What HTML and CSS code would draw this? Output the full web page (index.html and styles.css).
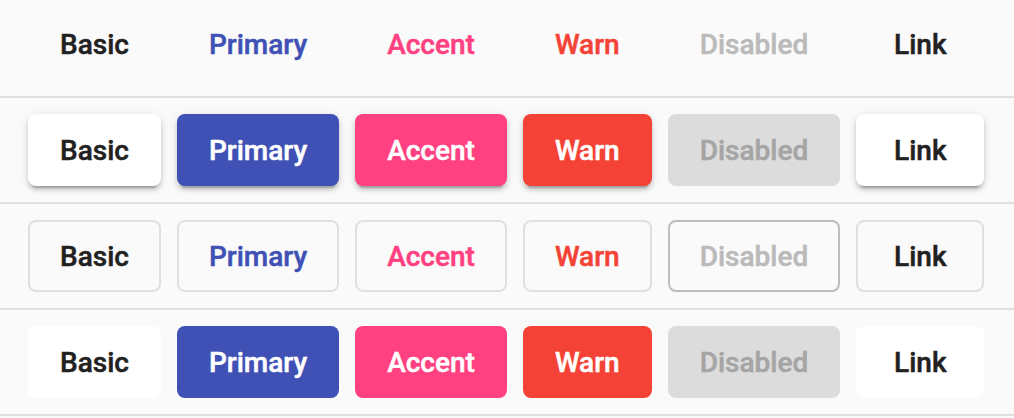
FILE: index.html
```html
<!DOCTYPE html>
<html>
<head>
<meta charset="utf-8">
<link rel="stylesheet" href="styles.css">
</head>
<body>
<section class="row row-first">
  <button class="btn">Basic</button>
  <button class="btn c-primary">Primary</button>
  <button class="btn c-accent">Accent</button>
  <button class="btn c-warn">Warn</button>
  <button class="btn c-disabled">Disabled</button>
  <button class="btn">Link</button>
</section>
<section class="row raised">
  <button class="btn">Basic</button>
  <button class="btn f-primary">Primary</button>
  <button class="btn f-accent">Accent</button>
  <button class="btn f-warn">Warn</button>
  <button class="btn f-disabled">Disabled</button>
  <button class="btn">Link</button>
</section>
<section class="row stroked">
  <button class="btn">Basic</button>
  <button class="btn c-primary">Primary</button>
  <button class="btn c-accent">Accent</button>
  <button class="btn c-warn">Warn</button>
  <button class="btn c-disabled s-disabled">Disabled</button>
  <button class="btn">Link</button>
</section>
<section class="row flat">
  <button class="btn">Basic</button>
  <button class="btn f-primary">Primary</button>
  <button class="btn f-accent">Accent</button>
  <button class="btn f-warn">Warn</button>
  <button class="btn f-disabled">Disabled</button>
  <button class="btn">Link</button>
</section>
</body>
</html>
```

FILE: styles.css
```css
html, body {
  background: #fafafa;
}
body {
  margin: 0;
  padding-top: 8px;
  font-family: Roboto, "Liberation Sans", sans-serif;
}
.row {
  display: flex;
  gap: 16px;
  padding: 16px 0 16px 28px;
  border-bottom: 2px solid #e0e0e0;
}
.row-first {
  padding-top: 0;
}
.btn {
  box-sizing: border-box;
  height: 72px;
  min-width: 128px;
  padding: 0 32px;
  border: none;
  border-radius: 8px;
  background: transparent;
  color: #212121;
  font-family: Roboto, "Liberation Sans", sans-serif;
  font-size: 28px;
  font-weight: 500;
  -webkit-text-stroke: 0.5px currentColor;
  line-height: 74px;
  white-space: nowrap;
}
.c-primary { color: #3f51b5; }
.c-accent { color: #ff4081; }
.c-warn { color: #f44336; }
.c-disabled { color: #bababa; }

.raised .btn, .flat .btn {
  background: #fff;
}
.raised .btn {
  box-shadow: 0 6px 2px -4px rgba(0, 0, 0, 0.2), 0 4px 4px 0 rgba(0, 0, 0, 0.14), 0 2px 10px 0 rgba(0, 0, 0, 0.12);
}
.raised .btn.f-disabled {
  box-shadow: none;
}
.btn.f-primary { background: #3f51b5; color: #fff; }
.btn.f-accent { background: #ff4081; color: #fff; }
.btn.f-warn { background: #f44336; color: #fff; }
.btn.f-disabled { background: #dcdcdc; color: #a5a5a5; }

.stroked .btn {
  border: 2px solid #e0e0e0;
  padding: 0 30px;
  line-height: 70px;
}
.stroked .btn.s-disabled {
  border-color: #bdbdbd;
}
```
